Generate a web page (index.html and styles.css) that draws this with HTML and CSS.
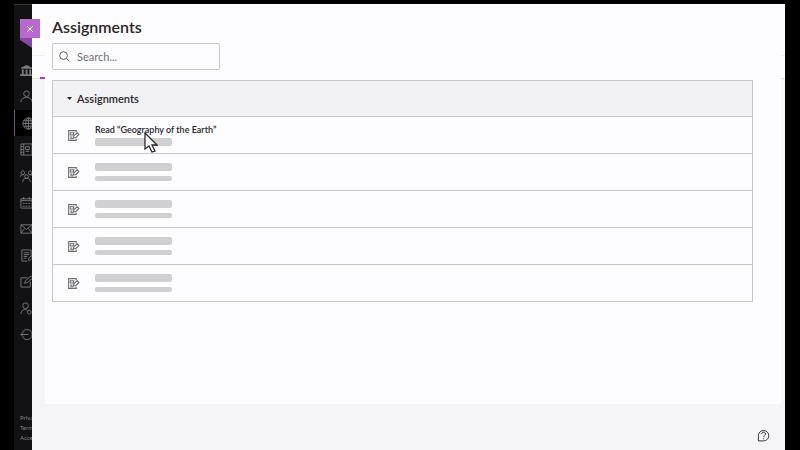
FILE: index.html
```html
<!DOCTYPE html>
<html lang="en">
<head>
<meta charset="utf-8">
<meta name="viewport" content="width=device-width, initial-scale=1">
<title>Assignments</title>
<link rel="stylesheet" href="styles.css">
</head>
<body>
<svg class="sprite" aria-hidden="true">
  <symbol id="assignment" viewBox="0 0 24 24"><path d="M17 6V3H3v18h14v-3M6 7h6v4H6zM6 15h4M6 18h6M14 7h1M12 16l1-4 6-5 3 3-6 6z"/></symbol>
</svg>
<div class="app">
  <aside class="sidebar">
    <span class="ribbon"></span>
    <nav class="nav" aria-label="Main">
      <a href="#" aria-label="Institution"><svg viewBox="0 0 14 14"><path class="solid" d="M1 4l6-3 6 3v1H1zM2 6h2v5H2zM6 6h2v5H6zM10 6h2v5h-2zM0 11h14v2H0z"/></svg></a>
      <a href="#" aria-label="Profile"><svg viewBox="0 0 14 14"><circle cx="7" cy="4" r="3"/><path d="M1 13c0-3 2-5 6-5s6 2 6 5"/></svg></a>
      <a href="#" class="current" aria-label="Activity"><svg class="globe" viewBox="0 0 14 14"><circle cx="7" cy="7" r="6"/><ellipse cx="7" cy="7" rx="3" ry="6"/><path d="M1 7h12M7 1v12M2 4h10M2 10h10"/></svg></a>
      <a href="#" aria-label="Courses"><svg viewBox="0 0 14 14"><path d="M1 1h12v12H1zM4 1v12M6 4h4v3H6zM6 9h4M1 4h2M1 7h2M1 10h2"/></svg></a>
      <a href="#" aria-label="Groups"><svg viewBox="0 0 14 14"><circle cx="3" cy="3" r="2"/><circle cx="11" cy="3" r="2"/><circle cx="7" cy="7" r="2"/><path d="M0 8c0-2 1-3 4-3M14 8c0-2-1-3-4-3M3 13c0-3 1-4 4-4s4 1 4 4"/></svg></a>
      <a href="#" aria-label="Calendar"><svg viewBox="0 0 14 14"><path d="M1 3h12v10H1zM1 5h12M4 1v3M10 1v3M3 8h2M6 8h2M9 8h2M3 11h2M6 11h2M9 11h2"/></svg></a>
      <a href="#" aria-label="Messages"><svg viewBox="0 0 14 14"><path d="M1 3h12v9H1zM1 3l6 5 6-5M1 12l4-5M13 12L9 7"/></svg></a>
      <a href="#" aria-label="Grades"><svg viewBox="0 0 14 14"><path d="M12 7V1H2v12h6M4 4h6M4 6h6M4 8h4M4 10h3M9 12l1-3 3-2v3l-3 3z"/></svg></a>
      <a href="#" aria-label="Tools"><svg viewBox="0 0 14 14"><path d="M8 3H1v10h10V7M5 9l1-3 6-5 2 2-6 5z"/></svg></a>
      <a href="#" aria-label="Account"><svg viewBox="0 0 14 14"><circle cx="6" cy="4" r="3"/><path d="M1 13c0-3 2-5 5-5l2 1"/><circle cx="10" cy="11" r="2"/></svg></a>
      <a href="#" aria-label="Sign out"><svg viewBox="0 0 14 14"><path d="M3 4c2-4 10-3 10 3s-8 7-10 3M9 7H1M4 4L1 7l3 3"/></svg></a>
    </nav>
    <footer class="legal"><a href="#">Privacy</a><a href="#">Terms</a><a href="#">Accessibility</a></footer>
  </aside>
  <main class="panel">
    <button class="close" type="button" aria-label="Close"><svg viewBox="0 0 8 8"><path d="M1 1l6 6M7 1L1 7"/></svg></button>
    <span class="tab-mark"></span>
    <div class="content">
      <h1>Assignments</h1>
      <label class="search">
        <svg viewBox="0 0 12 12"><circle cx="5" cy="5" r="4.2"/><path d="M8 8l3.5 3.5"/></svg>
        <input type="search" placeholder="Search..." aria-label="Search assignments">
      </label>
      <section class="list">
        <h2><button type="button" aria-expanded="true"><span class="caret"></span>Assignments</button></h2>
        <ul>
          <li><svg class="doc"><use href="#assignment"/></svg><div class="lines titled"><a href="#">Read “Geography of the Earth”</a><span class="bar"></span></div></li>
          <li><svg class="doc"><use href="#assignment"/></svg><div class="lines"><span class="bar"></span><span class="bar thin"></span></div></li>
          <li><svg class="doc"><use href="#assignment"/></svg><div class="lines"><span class="bar"></span><span class="bar thin"></span></div></li>
          <li><svg class="doc"><use href="#assignment"/></svg><div class="lines"><span class="bar"></span><span class="bar thin"></span></div></li>
          <li><svg class="doc"><use href="#assignment"/></svg><div class="lines"><span class="bar"></span><span class="bar thin"></span></div></li>
        </ul>
      </section>
    </div>
    <button class="help" type="button" aria-label="Help"><svg viewBox="0 0 14 14"><path d="M1.500 12.800V7a5.600 5.600 0 1 1 5.600 5.800z"/><path d="M5 5.500C5 2.700 9.200 2.800 9.200 5.400 9.200 7 7.200 7 7.200 8.800M7.200 10v1"/></svg></button>
  </main>
</div>
<svg class="pointer" viewBox="0 0 14 22" aria-hidden="true"><path d="M1 1v16l4-3 3 6 3-1-3-6h5z"/></svg>
</body>
</html>
```
FILE: styles.css
```css
* { box-sizing: border-box; }
body {
  margin: 0;
  background: #000;
  color: #28262b;
  font-family: Lato, "Liberation Sans", sans-serif;
}
button { padding: 0; border: 0; background: none; font: inherit; color: inherit; }
a { color: inherit; text-decoration: none; }
svg { fill: none; stroke: currentColor; }
.sprite { position: absolute; width: 0; height: 0; }

.app {
  display: flex;
  min-height: 100vh;
  padding: 4px 15px 0 14px;
}

.sidebar {
  display: flex;
  flex-direction: column;
  width: 18px;
  overflow: hidden;
  background: #121114;
  border-top: 1px solid #333;
  color: #7b797e;
}
.ribbon {
  flex: none;
  width: 12px;
  height: 10px;
  margin: 33px 0 9px 6px;
  background: #8548a5;
  clip-path: polygon(0 0, 100% 0, 100% 100%, 0 20%);
}
.nav { display: grid; grid-auto-rows: 1fr; height: 291px; }
.nav a { display: flex; align-items: center; padding-left: 6px; }
.nav svg { flex: none; width: 13px; height: 13px; }
.nav .solid { fill: currentColor; stroke: none; }
.nav .current { padding-left: 7px; background: #000; border-left: 1px solid #75507f; }
.legal {
  display: flex;
  flex-direction: column;
  margin-top: auto;
  padding: 0 0 7px 6px;
  font-size: 6px;
  line-height: 10px;
  color: #858387;
}

.panel {
  position: relative;
  display: flex;
  flex-direction: column;
  flex: 1;
  min-width: 0;
  background: linear-gradient(#fdfcfe 51px, #eeedef 51px 52px, #fdfcfe 52px 74px, #e3e2e5 74px 75px, #f5f4f6 75px);
}
.close {
  position: absolute;
  top: 15px;
  left: -12px;
  display: grid;
  place-items: center;
  width: 20px;
  height: 19px;
  background: #b968cf;
  color: #fff;
}
.close svg { width: 8px; height: 8px; }
.tab-mark {
  position: absolute;
  top: 73px;
  left: 8px;
  width: 5px;
  height: 2px;
  background: #9a43b8;
}
.content {
  margin: 0 4px 0 13px;
  padding: 12px 28px 102px 7px;
  background: #fdfcfe;
}
h1 { margin: 0 0 5px; font-size: 16px; font-weight: 600; line-height: 22px; }
.search {
  display: flex;
  align-items: center;
  gap: 7px;
  width: 168px;
  height: 27px;
  padding: 0 6px;
  border: 1px solid #c8c7cb;
  border-radius: 2px;
  color: #55535a;
}
.search svg { flex: none; width: 11px; height: 11px; }
.search input {
  min-width: 0;
  flex: 1;
  padding: 0;
  border: 0;
  outline: 0;
  background: none;
  font: 11px/16px Lato, sans-serif;
}
.search input::placeholder { color: #727076; opacity: 1; }

.list { margin-top: 10px; border: 1px solid #c8c7cb; }
.list h2 { margin: 0; background: #f2f1f3; font-size: 11px; font-weight: 600; line-height: 16px; }
.list h2 button { display: flex; align-items: center; width: 100%; height: 35px; padding-left: 14px; }
.caret {
  width: 5px;
  height: 3px;
  margin-right: 5px;
  background: #28262b;
  clip-path: polygon(0 0, 100% 0, 50% 100%);
}
.list ul { margin: 0; padding: 0; list-style: none; }
.list li {
  display: flex;
  align-items: center;
  gap: 15px;
  height: 37px;
  padding-left: 14px;
  border-top: 1px solid #c8c7cb;
}
.doc { width: 13px; height: 13px; color: #6f6d74; stroke-width: 2px; }
.lines { display: flex; flex-direction: column; gap: 5px; }
.titled { gap: 2px; padding-bottom: 2px; }
.lines a { font-size: 9px; font-weight: 600; line-height: 13px; }
.bar { width: 77px; height: 8px; border-radius: 2px; background: #d0cfd2; }
.thin { height: 5px; }
.help { align-self: flex-end; margin: 25px 15px 0 0; height: 13px; }
.help svg { display: block; width: 13px; height: 13px; }

.pointer {
  position: absolute;
  top: 132px;
  left: 144px;
  width: 14px;
  height: 22px;
  fill: #fff;
  stroke: #28262b;
  stroke-width: 1.3px;
}
```
